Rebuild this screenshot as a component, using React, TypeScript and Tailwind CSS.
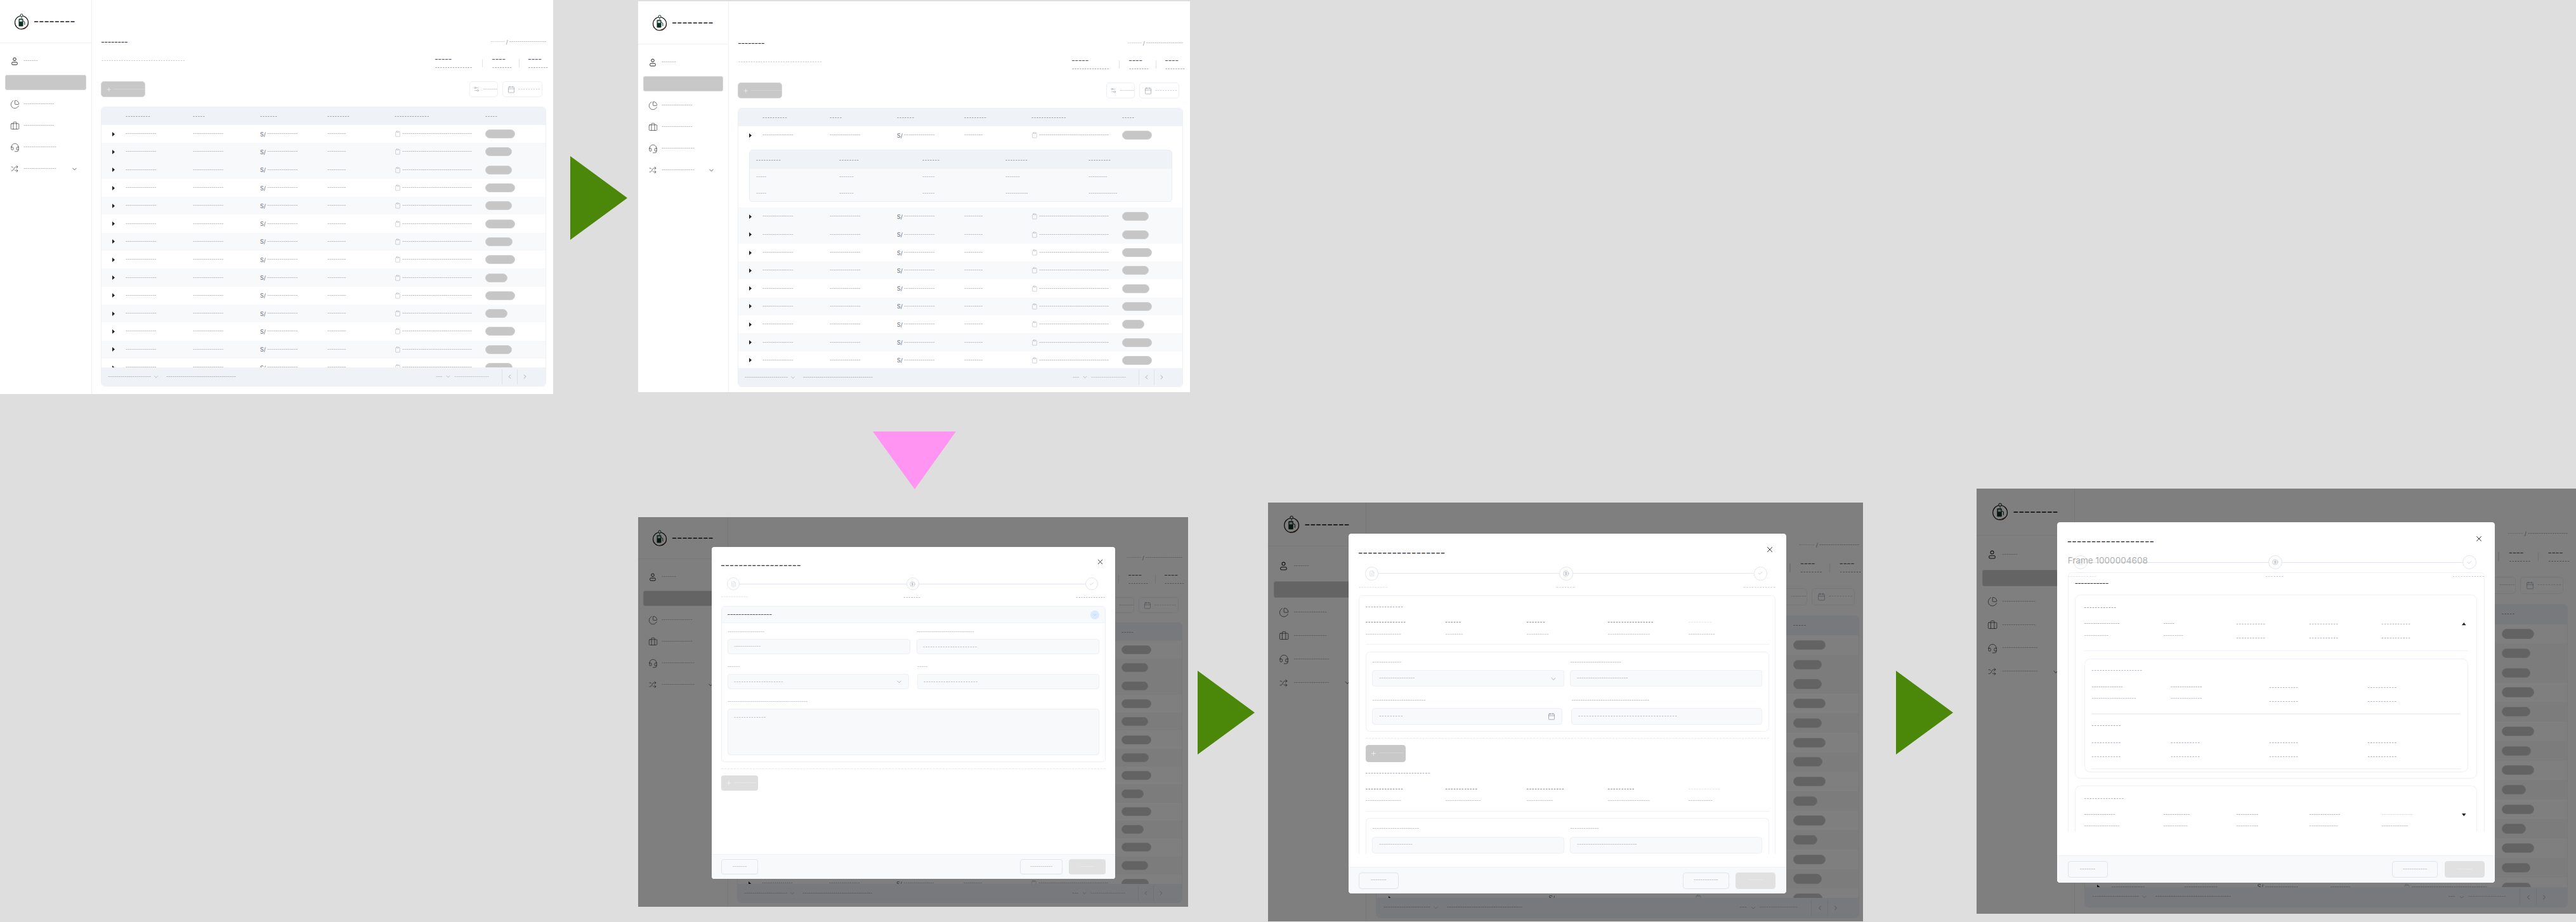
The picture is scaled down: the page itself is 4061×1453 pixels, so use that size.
import type { ReactNode } from "react";
import clsx from "clsx";
import {
  Briefcase,
  Calendar,
  ChartPie,
  Check,
  ChevronDown,
  ChevronLeft,
  ChevronRight,
  CircleDollarSign,
  Clipboard,
  FileText,
  Headset,
  Plus,
  Settings2,
  Shuffle,
  X,
} from "lucide-react";

// the reference has every label masked as dashes, so text here is dashes too
function Line({ w, className }: { w: number; className?: string }) {
  return (
    <span className={clsx("block whitespace-nowrap text-[7px] font-medium leading-[6px] text-[#989fac]", className)}>
      {"-".repeat(Math.round(w / 2.75))}
    </span>
  );
}

function Spaced({ w, className }: { w: number; className?: string }) {
  return (
    <span
      className={clsx(
        "block whitespace-nowrap text-[6.5px] font-bold leading-[6px] tracking-[0.9px] text-[#7a8394]",
        className,
      )}
    >
      {"-".repeat(Math.round(w / 3.55))}
    </span>
  );
}

function Heavy({ n, className }: { n: number; className?: string }) {
  return <span className={clsx("block whitespace-nowrap font-extrabold leading-none", className)}>{"–".repeat(n)}</span>;
}

function Logo() {
  return (
    <svg width="26" height="28" viewBox="0 0 26 28" fill="none">
      <circle cx="13" cy="15.5" r="10.5" stroke="#111" strokeWidth="1.2" />
      <circle cx="13" cy="4" r="2" fill="#fff" stroke="#1d3b30" strokeWidth="1" />
      <path d="M13 6v3" stroke="#1d3b30" strokeWidth="1" />
      <rect x="8.5" y="9.5" width="7" height="12" rx="1" fill="#0d2e22" />
      <rect x="9.8" y="11" width="4.4" height="3.2" fill="#c9d6cf" />
      <path d="M15.5 13l2.4 1.6v4.6" stroke="#0d2e22" strokeWidth="1" />
      <path d="M5 24c6 2.6 13 1.4 19-6-2 6.5-11 10.5-19 6z" fill="#5b2f1c" />
    </svg>
  );
}

function UserIcon() {
  return (
    <svg width="12" height="13" viewBox="0 0 12 13" fill="none" stroke="#222" strokeWidth="1">
      <circle cx="6" cy="3.3" r="2.3" />
      <rect x="1.6" y="8" width="8.8" height="4" rx="1.6" />
    </svg>
  );
}

function Caret({ dir = "right" }: { dir?: "right" | "up" | "down" }) {
  if (dir === "right") {
    return (
      <svg width="4" height="7" viewBox="0 0 4 7">
        <path d="M0 0l4 3.5L0 7z" fill="#222" />
      </svg>
    );
  }
  return (
    <svg width="6" height="4" viewBox="0 0 6 4">
      <path d={dir === "up" ? "M3 0l3 4H0z" : "M0 0h6L3 4z"} fill="#222" />
    </svg>
  );
}

function NavItem({ icon, w, chevron }: { icon: ReactNode; w: number; chevron?: boolean }) {
  return (
    <div className="flex h-[24px] items-center pl-[15px] pr-[21px]">
      <span className="flex w-[16px] justify-center">{icon}</span>
      <Line w={w} className="ml-[6px] text-[#97a2b4]" />
      {chevron && <ChevronDown size={11} className="ml-auto text-[#222]" strokeWidth={1.6} />}
    </div>
  );
}

function Sidebar({ width, head }: { width: string; head: string }) {
  return (
    <aside className={clsx("flex shrink-0 flex-col border-r border-[#eef1f6]", width)}>
      <div className={clsx("flex shrink-0 items-center border-b border-[#f0f2f6] pl-[21px]", head)}>
        <Logo />
        <Heavy n={8} className="ml-[7px] text-[12px] tracking-[2.2px] text-[#26262a]" />
      </div>
      <nav className="flex flex-col gap-[10px] pt-[16px]">
        <NavItem icon={<UserIcon />} w={19} />
        <div className="mx-[8px] h-[24px] rounded-[3px] border border-[#d6d6d6] bg-[#c8c8c8]" />
        <NavItem icon={<ChartPie size={15} strokeWidth={1} className="text-[#222]" />} w={41} />
        <NavItem icon={<Briefcase size={15} strokeWidth={1} className="text-[#222]" />} w={41} />
        <NavItem icon={<Headset size={15} strokeWidth={1} className="text-[#222]" />} w={45} />
        <NavItem icon={<Shuffle size={12} strokeWidth={1.2} className="text-[#222]" />} w={43} chevron />
      </nav>
    </aside>
  );
}

function Stat({ a, b }: { a: number; b: number }) {
  return (
    <div className="flex h-[26px] flex-col justify-between py-[3px]">
      <Heavy n={a} className="text-[8px] leading-[6px] tracking-[1.4px] text-[#4f5665]" />
      <Spaced w={b} className="text-[#7f8797]" />
    </div>
  );
}

const rowGrid = "grid grid-cols-[38px_106px_106px_106px_106px_143px_1fr] items-center";

const pillWidths = [
  "w-[47px]", "w-[42px]", "w-[42px]", "w-[47px]", "w-[42px]", "w-[47px]", "w-[43px]",
  "w-[47px]", "w-[35px]", "w-[47px]", "w-[35px]", "w-[47px]", "w-[42px]", "w-[43px]",
];

const pillWidthsOpen = [
  "w-[42px]", "w-[42px]", "w-[47px]", "w-[42px]", "w-[43px]",
  "w-[47px]", "w-[35px]", "w-[47px]",
];

function Row({ i, pill }: { i: number; pill: string }) {
  const gray = i === 1 || i === 2 || (i > 2 && i % 2 === 0);
  const tone = i === 2 ? "text-[#6f7785]" : "";
  return (
    <div className={clsx(rowGrid, "h-[28.3px] shrink-0", gray ? "bg-[#f8f9fb]" : "bg-white")}>
      <span className="flex justify-center">
        <Caret />
      </span>
      <Line w={42} className={tone} />
      <Line w={42} className={tone} />
      <div className="flex items-center">
        <span className="text-[9px] leading-none text-[#666d7a]">S/</span>
        <Line w={42} className={clsx("ml-[2px]", tone)} />
      </div>
      <Line w={26} className={tone} />
      <div className="flex items-center">
        <Clipboard size={10} strokeWidth={1} className="text-[#8f98a8]" />
        <Line w={94} className={clsx("ml-[2px]", tone)} />
      </div>
      <span className={clsx("block h-[14px] rounded-full border border-[#d2d2d2] bg-[#c6c6c6]", pill)} />
    </div>
  );
}

function DetailTable() {
  const cols = [
    [34, 14, 14],
    [28, 19, 19],
    [25, 17, 16],
    [31, 19, 29],
    [31, 25, 38],
  ];
  return (
    <div className="bg-white px-[17px] pb-[9px] pt-[9px]">
      <div className="w-[667px] overflow-hidden rounded-[5px] border border-[#e9edf4] bg-[#f8f9fb]">
        <div className="grid h-[29px] grid-cols-5 items-center bg-[#eff3f8] pl-[10px]">
          {cols.map((c, i) => (
            <Spaced key={i} w={c[0]} />
          ))}
        </div>
        <div className="grid h-[26px] grid-cols-5 items-center pl-[10px]">
          {cols.map((c, i) => (
            <Line key={i} w={c[1]} />
          ))}
        </div>
        <div className="grid h-[25px] grid-cols-5 items-center pl-[10px]">
          {cols.map((c, i) => (
            <Line key={i} w={c[2]} />
          ))}
        </div>
      </div>
    </div>
  );
}

function Dashboard({
  className,
  sidebar = "w-[145px]",
  head = "h-[68px]",
  top = "pt-[59px]",
  bottom = "pb-[12px]",
  open,
}: {
  className: string;
  sidebar?: string;
  head?: string;
  top?: string;
  bottom?: string;
  open?: boolean;
}) {
  return (
    <div className={clsx("flex bg-white", className)}>
      <Sidebar width={sidebar} head={head} />
      <main className={clsx("flex min-w-0 flex-1 flex-col pl-[14px]", top, bottom)}>
        <div className="flex h-[14px] w-[702px] items-center justify-between pl-[1px]">
          <Heavy n={8} className="text-[8px] tracking-[1.25px] text-[#2a2e36]" />
          <div className="flex items-center gap-[2px]">
            <Line w={18} className="text-[#bdc3cd]" />
            <span className="text-[8px] leading-none text-[#7f8795]">/</span>
            <Line w={49} className="text-[#8a91a0]" />
          </div>
        </div>
        <div className="mt-[13px] flex w-[702px] items-start justify-between pl-[1px]">
          <Spaced w={121} className="mt-[7px] font-normal text-[#8c96a8]" />
          <div className="flex items-center">
            <Stat a={5} b={54} />
            <span className="ml-[15px] h-[13px] w-px bg-[#dfe4ec]" />
            <div className="ml-[15px] w-[42px]">
              <Stat a={4} b={27} />
            </div>
            <span className="h-[13px] w-px bg-[#dfe4ec]" />
            <div className="ml-[14px] w-[28px]">
              <Stat a={4} b={27} />
            </div>
          </div>
        </div>
        <div className="mt-[16px] flex h-[25px] w-[702px] items-center justify-between">
          <button className="flex h-[25px] w-[70px] items-center rounded-[5px] border border-[#d6d6d6] bg-[#c8c8c8] pl-[7px]">
            <Plus size={12} strokeWidth={1.4} className="text-white" />
            <Line w={42} className="ml-[3px] text-[#dedede]" />
          </button>
          <div className="mr-[6px] flex gap-[7px]">
            <button className="flex h-[25px] w-[45px] items-center rounded-[5px] border border-[#eceff5] pl-[5px]">
              <Settings2 size={11} strokeWidth={1.1} className="text-[#7f899b]" />
              <Line w={18} className="ml-[5px] text-[#b5bbc7]" />
            </button>
            <button className="flex h-[25px] w-[63px] items-center rounded-[5px] border border-[#eceff5] pl-[7px]">
              <Calendar size={12} strokeWidth={1.1} className="text-[#7f899b]" />
              <Spaced w={31} className="ml-[5px] font-normal text-[#9aa2b0]" />
            </button>
          </div>
        </div>
        <div className="mt-[15px] flex min-h-0 w-[702px] flex-1 flex-col overflow-hidden rounded-[6px] border border-[#edf0f6]">
          <div className={clsx(rowGrid, "h-[28px] shrink-0 bg-[#eff3f8]")}>
            <span />
            <Spaced w={34} />
            <Spaced w={16} />
            <Spaced w={25} />
            <Spaced w={31} />
            <Spaced w={50} />
            <Spaced w={18} />
          </div>
          <div className="min-h-0 flex-1 overflow-hidden">
            {open ? (
              <>
                <Row i={0} pill="w-[47px]" />
                <DetailTable />
                {pillWidthsOpen.map((p, i) => (
                  <Row key={i} i={i + 1} pill={p} />
                ))}
                <Row i={9} pill="w-[47px]" />
              </>
            ) : (
              pillWidths.map((p, i) => <Row key={i} i={i} pill={p} />)
            )}
          </div>
          <div className="flex h-[29px] shrink-0 items-center bg-[#eff3f8] pl-[10px]">
            <Line w={57} className="text-[#7f8695]" />
            <ChevronDown size={10} strokeWidth={1.2} className="ml-[3px] text-[#7f899b]" />
            <Line w={94} className="ml-[11px] text-[#9199a8]" />
            <Line w={8} className="ml-auto text-[#5d6473]" />
            <ChevronDown size={9} strokeWidth={1.4} className="ml-[5px] text-[#7f899b]" />
            <Line w={47} className="ml-[5px] text-[#aab1bd]" />
            <span className="ml-[20px] h-[24px] w-px bg-[#dde2ea]" />
            <span className="flex w-[23px] justify-center">
              <ChevronLeft size={11} strokeWidth={1.3} className="text-[#6f7a8e]" />
            </span>
            <span className="h-[24px] w-px bg-[#dde2ea]" />
            <span className="flex w-[22px] justify-center">
              <ChevronRight size={11} strokeWidth={1.3} className="text-[#6f7a8e]" />
            </span>
            <span className="w-[22px]" />
          </div>
        </div>
      </main>
    </div>
  );
}

function StepCircle({ children }: { children: ReactNode }) {
  return (
    <span className="flex size-[20px] shrink-0 items-center justify-center rounded-full border border-[#e1e5eb] bg-white text-[#8f98a8]">
      {children}
    </span>
  );
}

function Modal({
  className,
  body,
  labelTone,
  children,
}: {
  className: string;
  body: string;
  labelTone: string;
  children: ReactNode;
}) {
  return (
    <div className={clsx("absolute flex h-[523px] w-[636px] flex-col overflow-hidden rounded-[4px] bg-white", className)}>
      <div className="flex h-[48px] shrink-0 items-start justify-between pl-[15px] pr-[17px]">
        <Heavy n={18} className="mt-[23px] text-[10px] leading-[8px] tracking-[2.05px] text-[#33363e]" />
        <X size={13} strokeWidth={1.6} className="mt-[17px] text-[#1f2430]" />
      </div>
      <div className="flex h-[20px] shrink-0 items-center pl-[24px] pr-[27px]">
        <StepCircle>
          <FileText size={9} strokeWidth={1} className="text-[#b5bcc8]" />
        </StepCircle>
        <span className="h-px flex-1 bg-[#dfe7f2]" />
        <StepCircle>
          <CircleDollarSign size={9} strokeWidth={1.2} />
        </StepCircle>
        <span className="h-px flex-1 bg-[#dfe7f2]" />
        <StepCircle>
          <Check size={8} strokeWidth={1.2} />
        </StepCircle>
      </div>
      <div className="mt-[8px] flex h-[6px] shrink-0 justify-between px-[15px]">
        <Spaced w={39} className="font-normal text-[#c7ccd5]" />
        <Spaced w={26} className={labelTone} />
        <Spaced w={43} className={labelTone} />
      </div>
      <div className={clsx("min-h-0 flex-1 overflow-hidden px-[15px]", body)}>{children}</div>
      <div className="flex h-[39px] shrink-0 items-center border-t border-[#eef1f6] bg-[#f8f9fb] px-[15px]">
        <button className="flex h-[24px] w-[58px] items-center justify-center rounded-[4px] border border-[#dfe4ec]">
          <Line w={19} className="text-[#a9afbb]" />
        </button>
        <button className="ml-auto flex h-[24px] w-[67px] items-center justify-center rounded-[4px] border border-[#dfe4ec]">
          <Line w={29} className="text-[#a9afbb]" />
        </button>
        <button className="ml-[10px] flex h-[24px] w-[58px] items-center justify-center rounded-[4px] bg-[#e1e1e1]">
          <Line w={19} className="text-[#f2f2f2]" />
        </button>
      </div>
    </div>
  );
}

function Field({
  label,
  value,
  width,
  icon,
  grow,
  spaced,
}: {
  label: number;
  value: number;
  width: string;
  icon?: ReactNode;
  grow?: boolean;
  spaced?: boolean;
}) {
  return (
    <div className={clsx("flex flex-col", width)}>
      <div className="flex h-[10px] items-center">
        <Line w={label} className="text-[#a9b0bc]" />
      </div>
      <div
        className={clsx(
          "mt-[6px] flex rounded-[4px] border border-[#eceff5] bg-[#f8f9fb] pl-[9px] pr-[9px]",
          grow ? "h-[73px] items-start pt-[9px]" : "h-[24px] items-center",
        )}
      >
        {spaced ? <Spaced w={value} className="font-medium text-[#939cac]" /> : <Line w={value} className="text-[#a9b0bc]" />}
        {icon && <span className="ml-auto">{icon}</span>}
      </div>
    </div>
  );
}

const chev = <ChevronDown size={11} strokeWidth={1.2} className="text-[#6f7a8e]" />;

function AddButton({ tone, text }: { tone: string; text: string }) {
  return (
    <button className={clsx("flex h-[24px] w-[58px] items-center rounded-[4px] pl-[7px]", tone)}>
      <Plus size={10} strokeWidth={1.4} className="text-white" />
      <Line w={30} className={clsx("ml-[3px]", text)} />
    </button>
  );
}

function Step1Body() {
  return (
    <>
      <div className="rounded-[5px] border border-[#edf0f6]">
        <div className="flex h-[26px] items-center justify-between border-b border-[#eef1f6] bg-[#f8f9fb] pl-[9px] pr-[9px]">
          <Heavy n={16} className="text-[7px] tracking-[0.9px] text-[#4b515e]" />
          <span className="flex size-[14px] items-center justify-center rounded-full bg-[#dbeafe]">
            <ChevronDown size={8} strokeWidth={1} className="text-[#8fa3bf]" />
          </span>
        </div>
        <div className="flex flex-col gap-[15px] px-[9px] pb-[10px] pt-[9px]">
          <div className="flex justify-between">
            <Field label={49} value={37} width="w-[288px]" />
            <Field label={77} value={77} width="w-[288px]" spaced />
          </div>
          <div className="flex justify-between">
            <Field label={17} value={70} width="w-[286px]" spaced icon={chev} />
            <Field label={14} value={78} width="w-[287px]" spaced />
          </div>
          <Field label={106} value={46} width="w-full" grow spaced />
        </div>
      </div>
      <div className="mt-[10px] border-t border-dashed border-[#e6e9ef]" />
      <div className="mt-[10px]">
        <AddButton tone="bg-[#dedede]" text="text-[#efefef]" />
      </div>
    </>
  );
}

function Summary({ labels, values, muted }: { labels: number[]; values: number[]; muted?: boolean }) {
  return (
    <>
      <div className="mt-[17px] grid grid-cols-[116px_118px_118px_117px_1fr]">
        {labels.map((w, i) => (
          <div key={i} className="flex flex-col gap-[11px]">
            <Spaced w={w} className={clsx(i === 4 ? "font-normal text-[#ccd1d9]" : "text-[#667080]", muted && i === 3 && "text-[#4a5160]")} />
            <Line w={values[i]} className="text-[#aeb5c0]" />
          </div>
        ))}
      </div>
      <div className="mt-[11px] h-px bg-[#eef1f6]" />
    </>
  );
}

function Step2Body() {
  return (
    <div className="rounded-[6px] border border-[#edf0f6] px-[9px] pt-[13px]">
      <Spaced w={50} className="text-[#8d96a5]" />
      <Summary labels={[52, 20, 26, 61, 32]} values={[43, 23, 27, 53, 33]} />
      <div className="mt-[10px] flex flex-col gap-[15px] rounded-[6px] border border-[#edf0f6] px-[9px] pb-[9px] pt-[10px]">
        <div className="flex justify-between">
          <Field label={36} value={43} width="w-[279px]" icon={chev} />
          <Field label={64} value={64} width="w-[279px]" />
        </div>
        <div className="flex justify-between">
          <Field
            label={66}
            value={33}
            width="w-[276px]"
            spaced
            icon={<Calendar size={11} strokeWidth={1.2} className="text-[#6f7a8e]" />}
          />
          <Field label={97} value={131} width="w-[277px]" spaced />
        </div>
      </div>
      <div className="mt-[9px] border-t border-dashed border-[#e6e9ef]" />
      <div className="mt-[10px]">
        <AddButton tone="bg-[#c8c8c8]" text="text-[#dedede]" />
      </div>
      <Spaced w={84} className="mt-[14px] text-[#8d96a5]" />
      <Summary labels={[49, 43, 48, 35, 43]} values={[43, 43, 32, 53, 30]} muted />
      <div className="mt-[10px] flex justify-between rounded-[6px] border border-[#edf0f6] px-[9px] pb-[9px] pt-[10px]">
        <Field label={58} value={40} width="w-[279px]" />
        <Field label={35} value={74} width="w-[279px]" />
      </div>
    </div>
  );
}

function Pair({ a, b, dark, spaced }: { a: number; b: number; dark?: string; spaced?: boolean }) {
  if (spaced) {
    return (
      <div className="mt-px flex flex-col gap-[14px]">
        <Spaced w={a} className={clsx("font-medium", dark ?? "text-[#8090ab]")} />
        <Spaced w={b} className={clsx("font-medium", dark ?? "text-[#8090ab]")} />
      </div>
    );
  }
  return (
    <div className="flex flex-col gap-[11px]">
      <Line w={a} className={dark ?? "text-[#3f4656]"} />
      <Line w={b} className="text-[#a8b0be]" />
    </div>
  );
}

const reviewGrid = "grid grid-cols-[115px_106px_106px_105px_117px_1fr]";
const nestedGrid = "grid grid-cols-[115px_143px_143px_1fr]";

function Step3Body() {
  return (
    <div className="rounded-[6px] border border-[#edf0f6] px-[10px] pt-[12px]">
      <Heavy n={11} className="text-[7px] leading-[6px] tracking-[0.95px] text-[#2f333c]" />
      <div className="mt-[12px] h-[267px] rounded-[8px] border border-[#edf0f6] px-[12px] pt-[16px]">
        <Spaced w={42} className="text-[#828c9c]" />
        <div className={clsx(reviewGrid, "mt-[17px]")}>
          <Pair a={43} b={31} />
          <Pair a={14} b={25} />
          <Pair a={38} b={38} spaced />
          <Pair a={38} b={38} spaced />
          <Pair a={38} b={38} spaced />
          <span className="mt-[1px]">
            <Caret dir="up" />
          </span>
        </div>
        <div className="mt-[14px] h-px bg-[#eef1f6]" />
        <div className="mt-[11px] h-[165px] rounded-[8px] border border-[#edf0f6] px-[10px] pt-[14px]">
          <Spaced w={69} className="font-medium text-[#8090ab]" />
          <div className={clsx(nestedGrid, "mt-[18px]")}>
            <Pair a={38} b={56} />
            <Pair a={38} b={38} />
            <Pair a={38} b={38} spaced />
            <Pair a={38} b={38} spaced />
          </div>
          <div className="mt-[14px] h-px bg-[#eef1f6]" />
          <Spaced w={38} className="mt-[14px] text-[#8d96a5]" />
          <div className={clsx(nestedGrid, "mt-[18px]")}>
            <Pair a={38} b={38} spaced />
            <Pair a={38} b={38} spaced />
            <Pair a={38} b={38} spaced />
            <Pair a={38} b={38} spaced dark="text-[#5f6f8d]" />
          </div>
          <div className="mt-[14px] h-px bg-[#eef1f6]" />
        </div>
      </div>
      <div className="mt-[10px] h-[120px] rounded-[8px] border border-[#edf0f6] px-[12px] pt-[16px]">
        <Spaced w={54} className="font-medium text-[#828c9c]" />
        <div className={clsx(reviewGrid, "mt-[17px]")}>
          <Pair a={38} b={43} />
          <Pair a={32} b={30} />
          <Pair a={27} b={28} />
          <Pair a={38} b={36} />
          <Pair a={38} b={33} dark="text-[#cdd2da]" />
          <span className="mt-[1px]">
            <Caret dir="down" />
          </span>
        </div>
      </div>
    </div>
  );
}

function Arrow({ className, color, points, w, h }: { className: string; color: string; points: string; w: number; h: number }) {
  return (
    <svg className={clsx("absolute", className)} width={w} height={h} viewBox={`0 0 ${w} ${h}`}>
      <polygon points={points} fill={color} />
    </svg>
  );
}

const greenArrow = { color: "#4b8708", points: "0,0 90,66 0,132", w: 90, h: 132 };

export default function App() {
  return (
    <div className="relative h-[1453px] w-[4061px] overflow-hidden bg-[#dedede] font-[Inter,sans-serif]">
      <div className="absolute left-0 top-0">
        <Dashboard className="h-[621px] w-[872px]" />
      </div>

      <Arrow className="left-[899px] top-[246px]" {...greenArrow} />

      <div className="absolute left-[1006px] top-[2px]">
        <Dashboard className="h-[616px] w-[870px]" sidebar="w-[143px]" bottom="pb-[8px]" open />
      </div>

      <Arrow className="left-[1376px] top-[680px]" color="#ff94f2" points="0,0 131,0 66,91" w={131} h={91} />

      <div className="absolute left-[1006px] top-[815px] h-[614px] w-[867px] overflow-hidden">
        <Dashboard className="h-[614px] w-[867px]" sidebar="w-[142px]" head="h-[66px]" top="pt-[57px]" bottom="pb-[6px]" />
        <div className="absolute inset-0 bg-black/50" />
        <Modal className="left-[116px] top-[47px]" body="mt-[11px]" labelTone="font-medium text-[#8090ab]">
          <Step1Body />
        </Modal>
      </div>

      <Arrow className="left-[1888px] top-[1057px]" {...greenArrow} />

      <div className="absolute left-[1999px] top-[792px]">
        <div className="relative h-[608px] w-[864.5px] overflow-hidden [zoom:1.085]">
          <Dashboard className="h-[608px] w-[864.5px]" sidebar="w-[143px]" head="h-[64px]" top="pt-[55px]" bottom="pb-[4px]" />
          <div className="absolute inset-0 bg-black/50" />
          <Modal className="left-[116.7px] top-[45px]" body="mb-[18px] mt-[8px]" labelTone="font-medium text-[#b3bac6]">
            <Step2Body />
          </Modal>
        </div>
      </div>

      <Arrow className="left-[2989px] top-[1057px]" {...greenArrow} />

      <div className="absolute left-[3116px] top-[770px]">
        <div className="relative h-[617.5px] w-[871px] overflow-hidden [zoom:1.085]">
          <Dashboard className="h-[617.5px] w-[871px]" sidebar="w-[143px]" bottom="pb-[9px]" />
          <div className="absolute inset-0 bg-black/50" />
          <Modal className="left-[117.4px] top-[49px]" body="-mt-[9px] mb-[34px]" labelTone="font-medium text-[#b3bac6]">
            <span className="absolute left-[15px] top-[48px] z-10 text-[12.5px] leading-[16px] text-[#aeaeae]">Frame 1000004608</span>
            <Step3Body />
          </Modal>
        </div>
      </div>
    </div>
  );
}
